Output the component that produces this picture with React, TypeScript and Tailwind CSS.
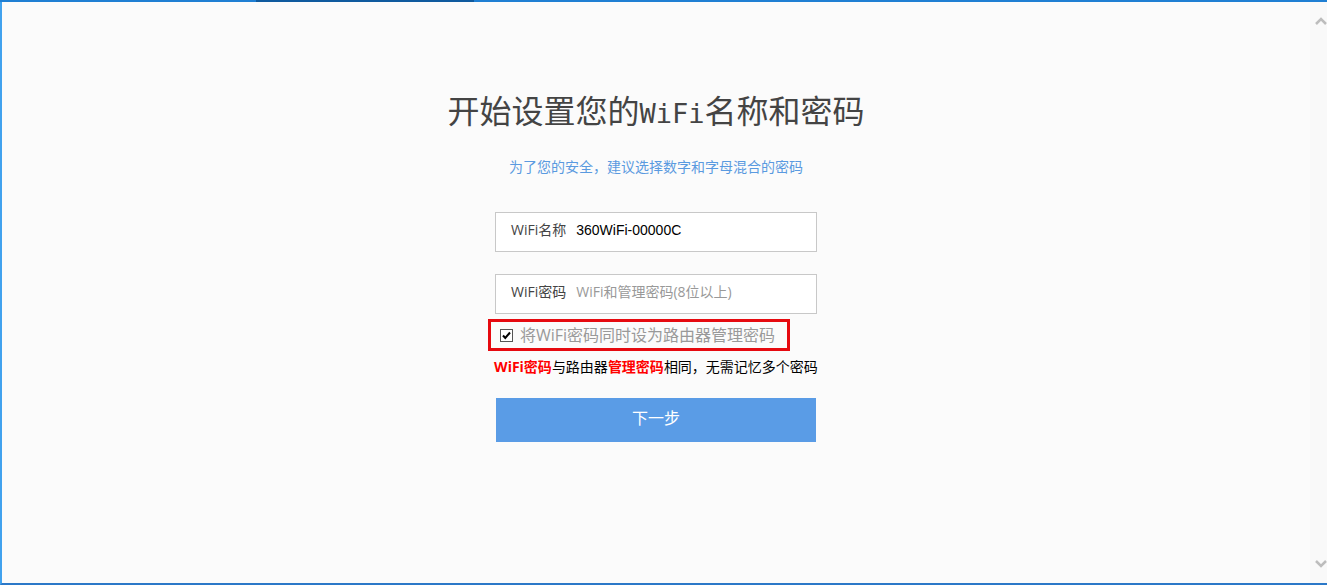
import { useState } from 'react'

const fields = [
  {
    id: 'wifi-name',
    label: 'WiFi名称',
    value: '360WiFi-00000C',
    placeholder: '',
    inputClass: "font-['Liberation_Sans',sans-serif] text-black",
  },
  {
    id: 'wifi-password',
    label: 'WiFi密码',
    value: '',
    placeholder: 'WiFi和管理密码(8位以上)',
    inputClass: 'text-black placeholder:text-[#999999]',
  },
]

export default function App() {
  const [samePassword, setSamePassword] = useState(true)

  return (
    <div className="flex h-screen flex-col bg-[#fbfbfb] font-['Open_Sans','Noto_Sans_CJK_SC',sans-serif]">
      {/* Window edge with the darker strip of the active tab */}
      <div className="h-[2px] shrink-0 bg-[#1f7fd3] pl-64">
        <div className="h-full w-[218px] bg-[#0f5a9e]" />
      </div>

      <div className="flex min-h-0 grow border-b-2 border-l-2 border-b-[#2b78c8] border-l-[#41a2ee]">
        <main className="flex grow flex-col items-center pt-[87px]">
          <h1 className="text-[32px] leading-[44px] text-[#444444]">
            开始设置您的
            <span className="font-['DejaVu_Sans_Mono',monospace] text-[27px]">WiFi</span>
            名称和密码
          </h1>
          <p className="mt-[21px] text-sm text-[#5a9ae0]">
            为了您的安全，建议选择数字和字母混合的密码
          </p>

          <form className="mt-[35px] flex flex-col items-center" onSubmit={(e) => e.preventDefault()}>
            <div className="flex flex-col gap-[22px]">
              {fields.map((field) => (
                <div
                  key={field.id}
                  className="flex h-10 w-[322px] items-center gap-[10px] border border-[#c8c8c8] bg-white pb-1 pl-[15px]"
                >
                  <label htmlFor={field.id} className="text-sm whitespace-nowrap text-[#444444]">
                    {field.label}
                  </label>
                  <input
                    id={field.id}
                    type="text"
                    defaultValue={field.value}
                    placeholder={field.placeholder}
                    className={`min-w-0 grow text-sm outline-none ${field.inputClass}`}
                  />
                </div>
              ))}
            </div>

            <div className="mt-[5px] mr-[34px] flex h-8 w-[302px] items-center border-[3px] border-[#e60a10] pl-[9px]">
              <label className="flex items-center gap-[7px] text-base leading-6 whitespace-nowrap text-[#999999]">
                <span className="relative flex">
                  <input
                    type="checkbox"
                    checked={samePassword}
                    onChange={(e) => setSamePassword(e.target.checked)}
                    className="peer size-[13px] appearance-none border border-[#555555] bg-white"
                  />
                  <svg
                    viewBox="0 0 13 13"
                    className="pointer-events-none absolute inset-0 size-[13px] opacity-0 peer-checked:opacity-100"
                  >
                    <path d="M3 6.5 5.3 9 10 3.5" fill="none" stroke="#000" strokeWidth="2" />
                  </svg>
                </span>
                将WiFi密码同时设为路由器管理密码
              </label>
            </div>

            <p className="mt-[6px] text-sm whitespace-nowrap text-black">
              <strong className="text-[#ff0000]">WiFi密码</strong>
              与路由器
              <strong className="text-[#ff0000]">管理密码</strong>
              相同，无需记忆多个密码
            </p>

            <button
              type="submit"
              className="mt-[21px] h-11 w-80 bg-[#5a9ce6] pb-1 text-base text-white"
            >
              下一步
            </button>
          </form>
        </main>

        <div className="flex w-[17px] shrink-0 flex-col items-end justify-between bg-[#f9f9f9] py-[14px]">
          <svg viewBox="0 0 12 10" className="h-[10px] w-3">
            <path d="M1 8 6 3 11 8" fill="none" stroke="#bdbdbd" strokeWidth="2.5" />
          </svg>
          <svg viewBox="0 0 12 10" className="h-[10px] w-3">
            <path d="M1 2 6 7 11 2" fill="none" stroke="#bdbdbd" strokeWidth="2.5" />
          </svg>
        </div>
      </div>
    </div>
  )
}
